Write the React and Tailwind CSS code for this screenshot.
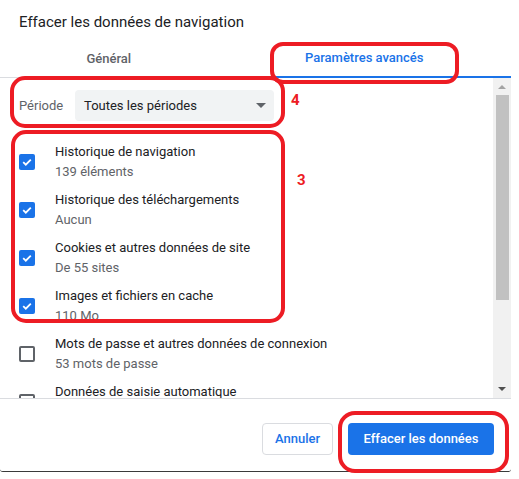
import React from "react";

const items = [
    { title: "Historique de navigation", sub: "139 éléments", checked: true },
    { title: "Historique des téléchargements", sub: "Aucun", checked: true },
    { title: "Cookies et autres données de site", sub: "De 55 sites", checked: true },
    { title: "Images et fichiers en cache", sub: "110 Mo", checked: true },
    { title: "Mots de passe et autres données de connexion", sub: "53 mots de passe", checked: false },
    { title: "Données de saisie automatique", sub: "Aucune", checked: false },
];

function Checkbox({ checked }) {
    if (checked) {
        return (
            <div className="w-[16px] h-[16px] shrink-0 rounded-[2px] bg-[#1a73e8] flex items-center justify-center">
                <svg width="12" height="12" viewBox="0 0 12 12">
                    <path d="M2.2 6.2 L4.8 8.7 L9.8 3.6" fill="none" stroke="white" strokeWidth="1.8" />
                </svg>
            </div>
        );
    }
    return <div className="w-[16px] h-[16px] shrink-0 rounded-[2px] border-2 border-[#5f6368]" />;
}

function Item({ title, sub, checked }) {
    return (
        <div className="h-[48px] shrink-0 flex items-center pl-[19px]">
            <Checkbox checked={checked} />
            <div className="ml-[20px] flex flex-col">
                <span className="text-[13px] leading-[20px] text-[#202124]">{title}</span>
                <span className="text-[13px] leading-[20px] text-[#5f6368]">{sub}</span>
            </div>
        </div>
    );
}

function Scrollbar() {
    return (
        <div className="w-[18px] shrink-0 bg-[#f1f1f1] flex flex-col items-center">
            <div className="h-[17px] flex items-center justify-center">
                <svg width="8" height="5" viewBox="0 0 8 5">
                    <path d="M0 5 L4 1 L8 5 Z" fill="#a3a3a3" />
                </svg>
            </div>
            <div className="w-[13px] h-[205px] bg-[#c1c1c1]" />
            <div className="flex-1" />
            <div className="h-[17px] flex items-center justify-center">
                <svg width="8" height="5" viewBox="0 0 8 5">
                    <path d="M0 0 L8 0 L4 4 Z" fill="#505050" />
                </svg>
            </div>
        </div>
    );
}

export default function App() {
    return (
        <div className="relative w-[519px] h-[479px] bg-white overflow-hidden" style={{ fontFamily: "Roboto, 'Noto Sans', sans-serif" }}>
            <div className="w-[511px] h-[472px] flex flex-col bg-white border-b border-[#3a3a3a] rounded-bl-[3px] rounded-br-[3px]">
                <div className="h-[40px] shrink-0 pl-[19px] pt-[10px]">
                    <span className="text-[15px] leading-[20px] text-[#202124]">Effacer les données de navigation</span>
                </div>

                <div className="h-[38px] shrink-0 flex border-b border-[#dadce0]">
                    <div className="flex-1 flex items-center justify-center pr-[38px] text-[13px] font-medium text-[#5f6368]">
                        Général
                    </div>
                    <div className="flex-1 flex items-center justify-center pr-[38px] text-[13px] font-medium text-[#1a73e8] border-b-2 border-[#1a73e8] -mb-px">
                        Paramètres avancés
                    </div>
                </div>

                <div className="h-[320px] shrink-0 flex">
                    <div className="flex-1 flex flex-col overflow-hidden">
                        <div className="mt-[12px] h-[31px] shrink-0 flex items-center pl-[19px]">
                            <span className="text-[13px] text-[#5f6368] w-[56px]">Période</span>
                            <div className="w-[199px] h-[31px] rounded-[4px] bg-[#f1f3f4] flex items-center justify-between pl-[9px] pr-[8px]">
                                <span className="text-[13px] text-[#202124]">Toutes les périodes</span>
                                <svg width="10" height="5" viewBox="0 0 10 5">
                                    <path d="M0 0 L10 0 L5 5 Z" fill="#5f6368" />
                                </svg>
                            </div>
                        </div>
                        <div className="mt-[17px] flex flex-col">
                            {items.map((it) => (
                                <Item key={it.title} {...it} />
                            ))}
                        </div>
                    </div>
                    <Scrollbar />
                </div>

                <div className="flex-1 border-t border-[#dadce0] flex justify-end items-start pt-[24px] pr-[17px] gap-[15px]">
                    <button className="h-[32px] w-[71px] rounded-[4px] border border-[#dadce0] bg-white text-[13px] font-medium text-[#1a73e8]">
                        Annuler
                    </button>
                    <button className="h-[32px] w-[146px] rounded-[4px] bg-[#1a73e8] text-[13px] font-medium text-white">
                        Effacer les données
                    </button>
                </div>
            </div>

            {/* annotations */}
            <div className="absolute left-[270px] top-[42px] w-[189px] h-[42px] border-4 border-[#ed1c24] rounded-[13px]" />
            <div className="absolute left-[10px] top-[76px] w-[275px] h-[52px] border-4 border-[#ed1c24] rounded-[15px]" />
            <div className="absolute left-[11px] top-[130px] w-[274px] h-[193px] border-4 border-[#ed1c24] rounded-[15px]" />
            <div className="absolute left-[338px] top-[411px] w-[171px] h-[62px] border-4 border-[#ed1c24] rounded-[17px]" />
            <span className="absolute left-[291px] top-[93px] text-[15px] font-bold text-[#ed1c24] leading-none">4</span>
            <span className="absolute left-[297px] top-[173px] text-[15px] font-bold text-[#ed1c24] leading-none">3</span>
        </div>
    );
}
